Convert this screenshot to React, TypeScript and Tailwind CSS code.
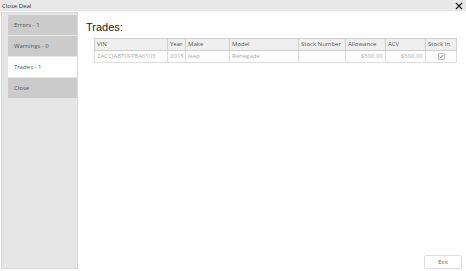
const cols = [
  { label: "VIN", w: "w-[73px]", value: "ZACCJABT0FPB46103", align: "text-left" },
  { label: "Year", w: "w-[18px]", value: "2015", align: "text-left" },
  { label: "Make", w: "w-[44px]", value: "Jeep", align: "text-left" },
  { label: "Model", w: "w-[69px]", value: "Renegade", align: "text-left" },
  { label: "Stock Number", w: "w-[47px]", value: "", align: "text-left" },
  { label: "Allowance", w: "w-[40px]", value: "$500.00", align: "text-right" },
  { label: "ACV", w: "w-[40px]", value: "$500.00", align: "text-right" },
];

const tabs = [
  { label: "Errors - 1", active: false },
  { label: "Warnings - 0", active: false },
  { label: "Trades - 1", active: true },
  { label: "Close", active: false },
];

function CloseIcon() {
  return (
    <svg width="8" height="8" viewBox="0 0 8 8">
      <path d="M1 1L7 7M7 1L1 7" stroke="#222" strokeWidth="1.3" />
    </svg>
  );
}

function Checkbox() {
  return (
    <span className="inline-flex items-center justify-center w-[7px] h-[7px] border border-[#bbb] bg-white rounded-[1px] align-middle">
      <svg width="5" height="5" viewBox="0 0 5 5">
        <path d="M0.8 2.7L1.9 3.8L4.2 1" stroke="#555" strokeWidth="0.8" fill="none" />
      </svg>
    </span>
  );
}

export default function App() {
  return (
    <div className="w-[466px] h-[271px] bg-white flex flex-col font-['Open_Sans',sans-serif] overflow-hidden">
      {/* Title bar */}
      <div className="h-[11px] bg-[#e8e8e8] flex items-center justify-between pl-[2px] pr-[3px]">
        <span className="text-[6px] leading-none text-[#333]">Close Deal</span>
        <CloseIcon />
      </div>

      <div className="flex flex-1 pt-[1px] pb-[2px]">
        {/* Sidebar */}
        <div className="ml-[1px] w-[77px] bg-[#e6e6e6] border border-[#dadada] pt-[2px] flex flex-col items-end gap-[1px]">
          {tabs.map((tab) => (
            <div
              key={tab.label}
              className={`w-[69px] h-[20px] flex items-center pl-[6px] text-[6px] text-[#555] ${
                tab.active ? "bg-white" : "bg-[#cbcbcb]"
              }`}
            >
              {tab.label}
            </div>
          ))}
        </div>

        {/* Main */}
        <div className="flex-1 flex flex-col">
          <h1 className="pl-[8px] pt-[9px] text-[11px] leading-[13px] text-[#222] font-['Liberation_Sans',sans-serif]">
            Trades:
          </h1>
          <table className="ml-[16px] mt-[4px] w-[362px] table-fixed border-collapse border border-[#cfcfcf] text-[6px]">
            <thead>
              <tr className="h-[12px] bg-[#efefef]">
                {cols.map((c) => (
                  <th key={c.label} className={`${c.w} border border-[#cfcfcf] px-[2px] text-left font-normal text-[#555] whitespace-nowrap`}>
                    {c.label}
                  </th>
                ))}
                <th className="w-[31px] border border-[#cfcfcf] px-[2px] text-left font-normal text-[#555]">Stock In</th>
              </tr>
            </thead>
            <tbody>
              <tr className="h-[12px] bg-white">
                {cols.map((c) => (
                  <td key={c.label} className={`border border-[#dcdcdc] px-[2px] ${c.align} text-[#aaa] whitespace-nowrap`}>
                    {c.value}
                  </td>
                ))}
                <td className="border border-[#dcdcdc] text-center leading-none">
                  <Checkbox />
                </td>
              </tr>
            </tbody>
          </table>

          <div className="mt-auto flex justify-end pr-[4px]">
            <button className="w-[38px] h-[14px] bg-white border border-[#ddd] rounded-[2px] text-[6px] text-[#666]">
              Exit
            </button>
          </div>
        </div>
      </div>
    </div>
  );
}
